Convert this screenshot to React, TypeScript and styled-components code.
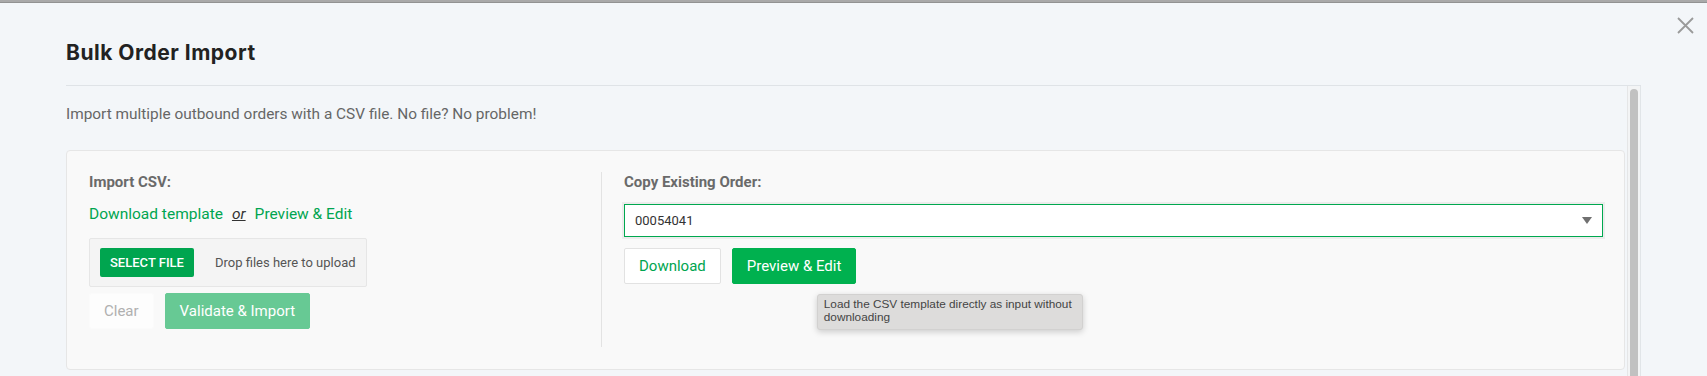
import React from "react";
import styled, { createGlobalStyle } from "styled-components";

const GlobalStyle = createGlobalStyle`
  html, body {
    margin: 0;
    padding: 0;
  }
  body {
    background: #f3f6f9;
    font-family: Roboto, "Liberation Sans", Arial, sans-serif;
    color: #333;
    overflow: hidden;
  }
  * {
    box-sizing: border-box;
  }
`;

const TopEdge = styled.div`
  height: 3px;
  background: #a9a9a9;
  border-bottom: 1px solid #929292;
`;

const ModalHeader = styled.header`
  display: flex;
  align-items: flex-start;
  justify-content: space-between;
  height: 82px;
  padding: 0 13px 0 66px;
`;

const Title = styled.h1`
  margin: 38px 0 0;
  font-family: Inter, "Open Sans", sans-serif;
  font-size: 21px;
  line-height: 24px;
  font-weight: 700;
  letter-spacing: 0.5px;
  color: #222;
`;

const CloseButton = styled.button`
  margin-top: 14px;
  width: 17px;
  height: 17px;
  padding: 0;
  border: 0;
  background: none;
  color: #9a9a9a;
  cursor: pointer;
`;

const ScrollArea = styled.div`
  display: flex;
  height: 291px;
  margin: 0 66px;
  border-top: 1px solid #dfe3e7;
`;

const Content = styled.div`
  flex: 1;
  min-width: 0;
  padding: 17px 2px 0 0;
`;

const ScrollTrack = styled.div`
  width: 14px;
  padding: 3px 2px 0;
  overflow: hidden;
  background: #f3f4f5;
  border-left: 1px solid #e5e6e7;
  border-right: 1px solid #e1e5e8;
`;

const ScrollThumb = styled.div`
  height: 400px;
  border-radius: 4px 4px 0 0;
  background: #c1c1c1;
`;

const Intro = styled.p`
  margin: 0 0 25px;
  font-size: 15.4px;
  line-height: 22px;
  color: #666;
`;

const Card = styled.section`
  display: grid;
  grid-template-columns: 535px 1fr;
  padding: 21px 0 22px;
  background: #f9f9f9;
  border: 1px solid #e6e6e6;
  border-radius: 4px;
`;

const Column = styled.div<{ $divider?: boolean }>`
  padding: ${({ $divider }) => ($divider ? "0 22px 18px" : "0 21px 18px 22px")};
  border-right: ${({ $divider }) => ($divider ? "1px solid #e3e3e3" : "none")};
`;

const SectionLabel = styled.h3`
  margin: 0;
  font-size: 15px;
  line-height: 20px;
  font-weight: 700;
  color: #6a6a6a;
`;

const LinkRow = styled.div`
  margin-top: 11px;
  font-size: 15.5px;
  line-height: 22px;
`;

const TextLink = styled.a`
  color: #00a550;
  text-decoration: none;
  cursor: pointer;
`;

const Or = styled.span`
  margin: 0 9px;
  font-style: italic;
  text-decoration: underline;
  color: #333;
`;

const DropZone = styled.div`
  display: flex;
  align-items: center;
  gap: 21px;
  width: fit-content;
  margin-top: 13px;
  padding: 9px 10px;
  background: #f4f4f4;
  border: 1px solid #e6e6e6;
  border-radius: 2px;
`;

const SelectFileButton = styled.button`
  height: 29px;
  padding: 0 10px;
  border: 0;
  border-radius: 2px;
  background: #00a54f;
  color: #fff;
  font-family: inherit;
  font-size: 13px;
  font-weight: 500;
  text-transform: uppercase;
`;

const DropHint = styled.span`
  font-size: 13px;
  color: #555;
`;

const ButtonRow = styled.div<{ $gap: number }>`
  display: flex;
  gap: 11px;
  margin-top: ${({ $gap }) => $gap}px;
`;

type Variant = "ghost" | "outline" | "primary" | "disabled";

const variants: Record<Variant, { bg: string; fg: string; border: string }> = {
  ghost: { bg: "#fdfdfd", fg: "#b0b0b0", border: "#fbfbfb" },
  outline: { bg: "#fff", fg: "#00a550", border: "#e2e2e2" },
  primary: { bg: "#00b14f", fg: "#fff", border: "#00b14f" },
  disabled: { bg: "#67c994", fg: "#fff", border: "#67c994" },
};

const ActionButton = styled.button<{ $variant: Variant }>`
  height: 36px;
  padding: 0 14px;
  border-radius: 2px;
  font-family: inherit;
  font-size: 15px;
  background: ${({ $variant }) => variants[$variant].bg};
  color: ${({ $variant }) => variants[$variant].fg};
  border: 1px solid ${({ $variant }) => variants[$variant].border};
`;

const SelectBox = styled.div`
  display: flex;
  align-items: center;
  justify-content: space-between;
  height: 33px;
  margin-top: 12px;
  padding: 0 10px;
  background: #fff;
  border: 1px solid #00a84f;
  box-shadow: 0 0 0 2px #ececec;
  font-size: 13px;
  color: #333;
`;

const TooltipAnchor = styled.div`
  position: relative;
`;

const Tooltip = styled.div`
  position: absolute;
  left: 85px;
  top: 46px;
  width: 266px;
  padding: 3px 5px 4px 6px;
  background: #dddcdb;
  border: 1px solid #d2d1d0;
  border-radius: 3px;
  box-shadow: 0 2px 6px rgba(0, 0, 0, 0.18);
  font-family: "Liberation Sans", Arial, sans-serif;
  font-size: 11.8px;
  line-height: 13.4px;
  color: #444;
  z-index: 2;
`;

const App: React.FC = () => {
  return (
    <>
      <GlobalStyle />
      <TopEdge />
      <ModalHeader>
        <Title>Bulk Order Import</Title>
        <CloseButton aria-label="Close">
          <svg width="17" height="17" viewBox="0 0 17 17">
            <path d="M1 1L16 16M16 1L1 16" stroke="currentColor" strokeWidth="1.8" />
          </svg>
        </CloseButton>
      </ModalHeader>

      <ScrollArea>
        <Content>
          <Intro>Import multiple outbound orders with a CSV file. No file? No problem!</Intro>
          <Card>
            <Column $divider>
              <SectionLabel>Import CSV:</SectionLabel>
              <LinkRow>
                <TextLink>Download template</TextLink>
                <Or>or</Or>
                <TextLink>Preview &amp; Edit</TextLink>
              </LinkRow>
              <DropZone>
                <SelectFileButton>Select file</SelectFileButton>
                <DropHint>Drop files here to upload</DropHint>
              </DropZone>
              <ButtonRow $gap={6}>
                <ActionButton $variant="ghost">Clear</ActionButton>
                <ActionButton $variant="disabled">Validate &amp; Import</ActionButton>
              </ButtonRow>
            </Column>

            <Column>
              <SectionLabel>Copy Existing Order:</SectionLabel>
              <SelectBox>
                <span>00054041</span>
                <svg width="10" height="7" viewBox="0 0 10 7">
                  <polygon points="0,0 10,0 5,7" fill="#707070" />
                </svg>
              </SelectBox>
              <ButtonRow $gap={11}>
                <ActionButton $variant="outline">Download</ActionButton>
                <TooltipAnchor>
                  <ActionButton $variant="primary">Preview &amp; Edit</ActionButton>
                  <Tooltip>Load the CSV template directly as input without downloading</Tooltip>
                </TooltipAnchor>
              </ButtonRow>
            </Column>
          </Card>
        </Content>
        <ScrollTrack>
          <ScrollThumb />
        </ScrollTrack>
      </ScrollArea>
    </>
  );
};

export default App;
